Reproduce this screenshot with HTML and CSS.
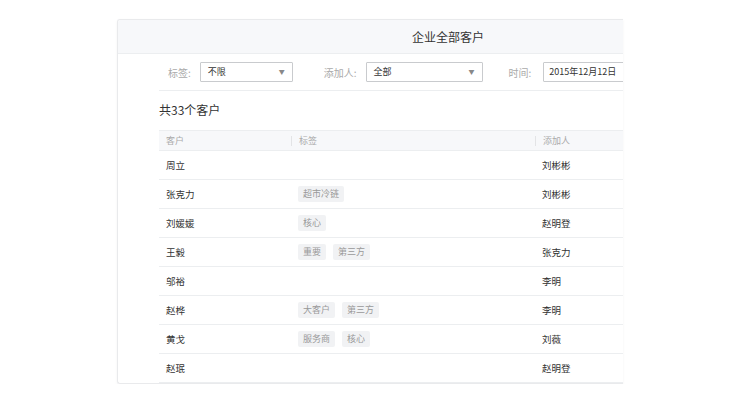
FILE: index.html
```html
<!DOCTYPE html>
<html lang="zh-CN">
<head>
    <meta charset="UTF-8">
    <title>企业全部客户</title>
    <link rel="stylesheet" href="styles.css">
</head>
<body>
    <div class="window">
        <div class="panel">
            <div class="panel-header">企业全部客户</div>

            <div class="panel-body">
                <div class="filters">
                    <span class="filter-label">标签:</span>
                    <div class="select tag-select">不限<span class="arrow">▼</span></div>
                    <span class="filter-label">添加人:</span>
                    <div class="select adder-select">全部<span class="arrow">▼</span></div>
                    <span class="filter-label time-label">时间:</span>
                    <div class="select date-select">2015年12月12日</div>
                </div>

                <div class="count">共33个客户</div>

                <div class="table">
                    <div class="row head">
                        <div class="cell">客户</div>
                        <div class="cell sep">标签</div>
                        <div class="cell sep">添加人</div>
                    </div>
                    <div class="row">
                        <div class="cell">周立</div>
                        <div class="cell"></div>
                        <div class="cell">刘彬彬</div>
                    </div>
                    <div class="row">
                        <div class="cell">张克力</div>
                        <div class="cell"><span class="tag">超市冷链</span></div>
                        <div class="cell">刘彬彬</div>
                    </div>
                    <div class="row">
                        <div class="cell">刘媛媛</div>
                        <div class="cell"><span class="tag">核心</span></div>
                        <div class="cell">赵明登</div>
                    </div>
                    <div class="row">
                        <div class="cell">王毅</div>
                        <div class="cell"><span class="tag">重要</span><span class="tag">第三方</span></div>
                        <div class="cell">张克力</div>
                    </div>
                    <div class="row">
                        <div class="cell">邬裕</div>
                        <div class="cell"></div>
                        <div class="cell">李明</div>
                    </div>
                    <div class="row">
                        <div class="cell">赵桦</div>
                        <div class="cell"><span class="tag">大客户</span><span class="tag">第三方</span></div>
                        <div class="cell">李明</div>
                    </div>
                    <div class="row">
                        <div class="cell">黄戈</div>
                        <div class="cell"><span class="tag">服务商</span><span class="tag">核心</span></div>
                        <div class="cell">刘薇</div>
                    </div>
                    <div class="row">
                        <div class="cell">赵珉</div>
                        <div class="cell"></div>
                        <div class="cell">赵明登</div>
                    </div>
                </div>
            </div>
        </div>
    </div>
</body>
</html>
```

FILE: styles.css
```css
body {
    margin: 0;
    background-color: #fff;
    font-family: "Noto Sans CJK SC", "Noto Sans", sans-serif;
    color: #333;
}

.window {
    margin: 19px 0 0 117px;
    width: 505px;
    height: 363px;
    overflow: hidden;
    border: 1px solid #e9eaec;
    border-right: none;
    border-radius: 3px 0 0 3px;
    box-shadow: 0 1px 3px rgba(0, 0, 0, 0.05);
}

.panel {
    width: 660px;
}

.panel-header {
    height: 33px;
    line-height: 33px;
    background-color: #f7f8fa;
    border-bottom: 1px solid #eceef0;
    text-align: center;
    font-size: 12px;
    color: #333;
}

.panel-body {
    padding-left: 41px;
}

/* filter row */
.filters {
    display: flex;
    align-items: center;
    height: 36px;
    padding-left: 9px;
    border-bottom: 1px solid #eceef0;
    font-size: 9px;
}

.filter-label {
    color: #aaa;
    font-size: 10px;
    margin-right: 9px;
}

.time-label {
    margin-right: 12px;
}

.select {
    box-sizing: border-box;
    height: 20px;
    line-height: 18px;
    border: 1px solid #c9cbce;
    border-radius: 1px;
    padding: 0 7px;
    color: #333;
    display: flex;
    justify-content: space-between;
}

.arrow {
    font-size: 6px;
    color: #888;
}

.tag-select {
    width: 93px;
    margin-right: 31px;
}

.adder-select {
    width: 117px;
    margin-right: 26px;
}

.date-select {
    width: 100px;
    padding-left: 5px;
}

.count {
    font-size: 12px;
    color: #333;
    padding: 9px 0 10px;
    line-height: 20px;
}

/* table */
.row {
    display: grid;
    grid-template-columns: 132px 244px 1fr;
    align-items: center;
    height: 28px;
    border-bottom: 1px solid #eceef0;
    font-size: 9.5px;
    color: #333;
}

.row.head {
    height: 19px;
    border-top: 1px solid #eceef0;
    background-color: #f7f8fa;
    color: #aaa;
    font-size: 9px;
}

.cell {
    padding-left: 7px;
}

.head .sep {
    border-left: 1px solid #e3e4e6;
    line-height: 10px;
}

.tag {
    display: inline-block;
    background-color: #f1f2f4;
    color: #999;
    font-size: 9px;
    line-height: 16px;
    padding: 0 5px;
    border-radius: 2px;
    margin-right: 7px;
}
```
